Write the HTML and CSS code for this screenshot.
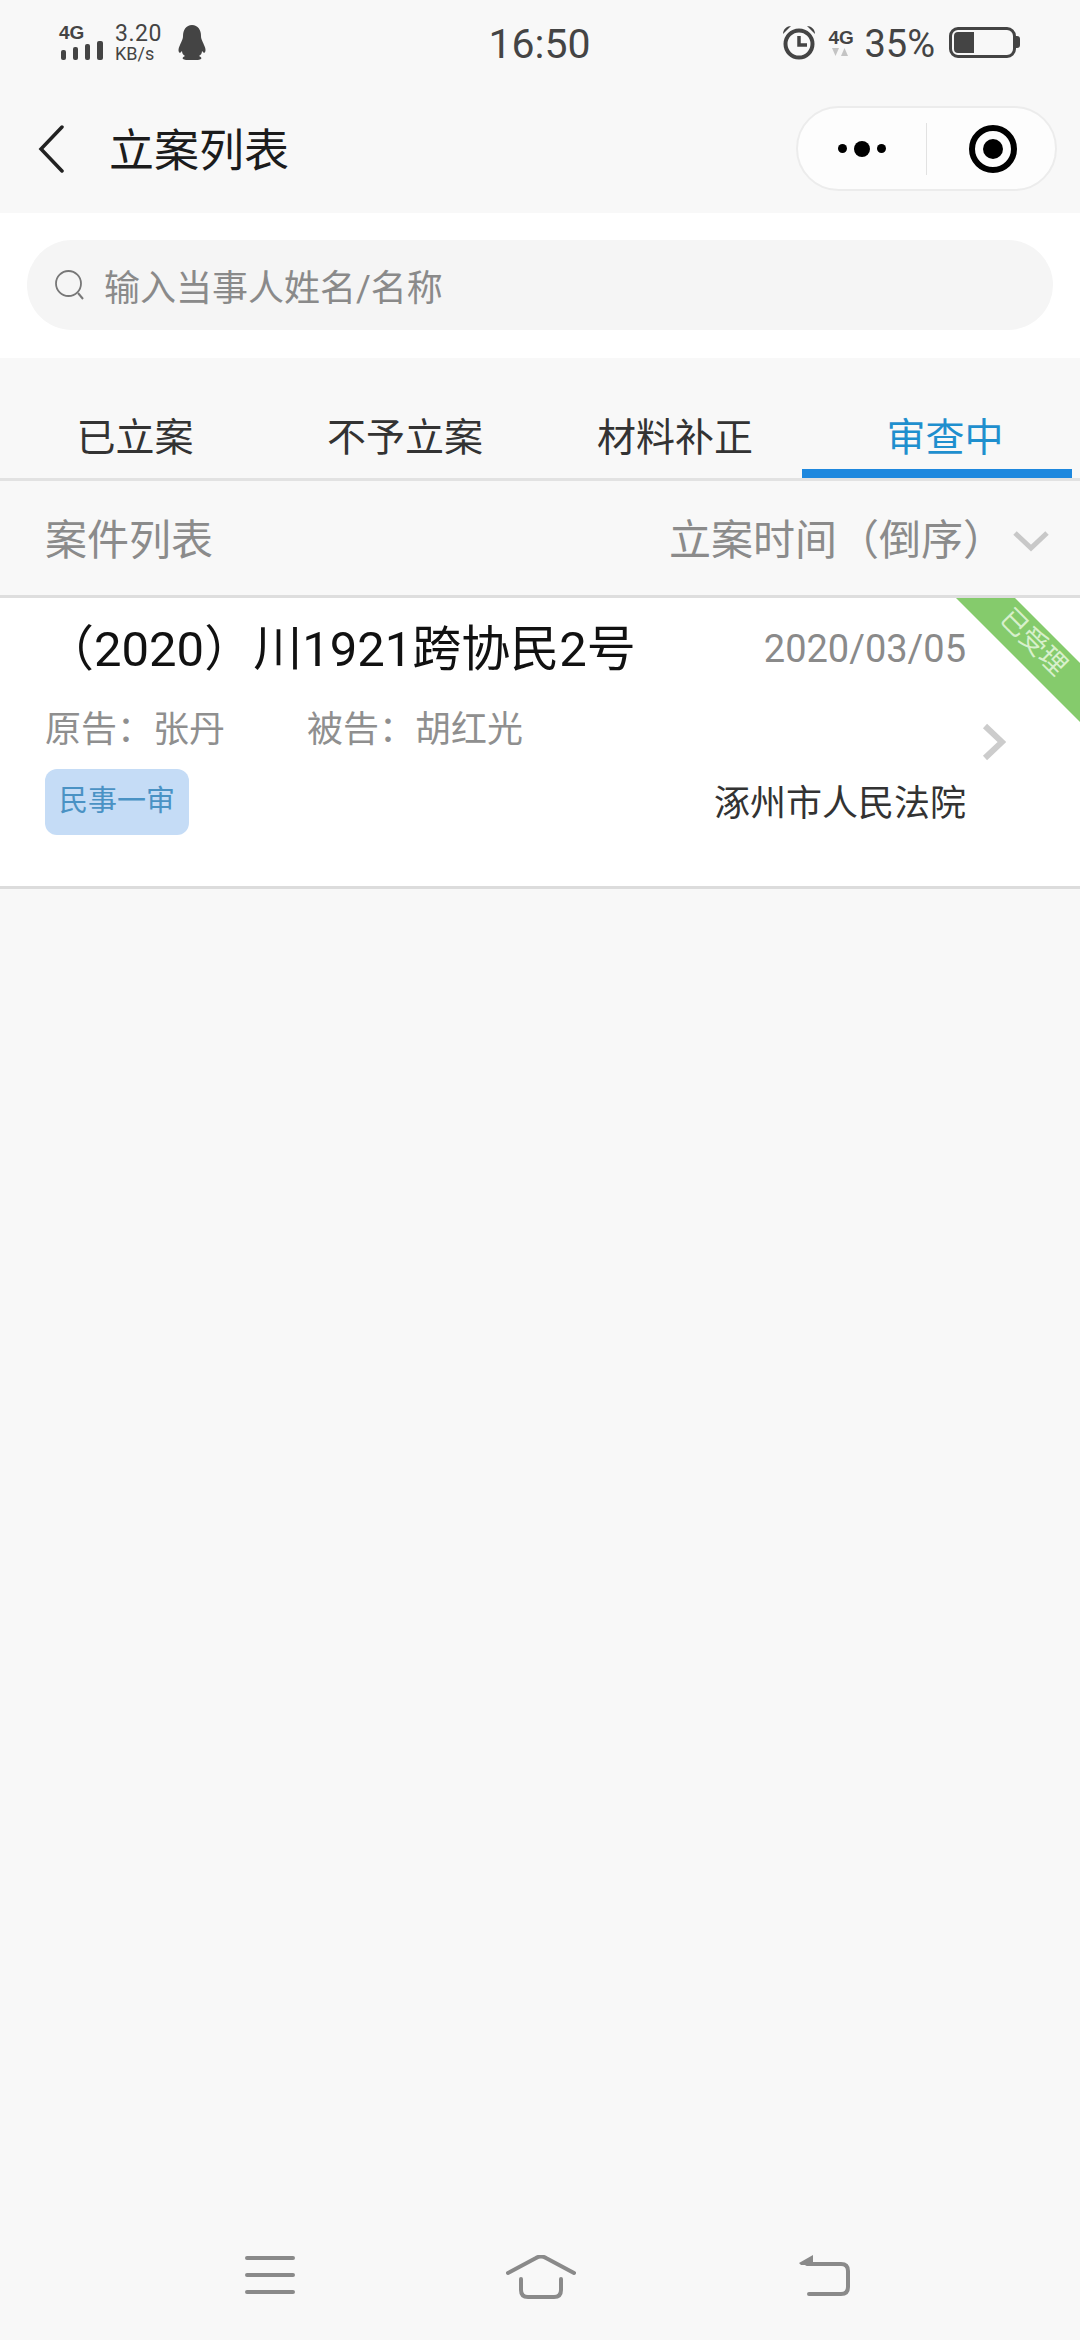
FILE: index.html
```html
<!DOCTYPE html>
<html lang="zh-CN">
<head>
  <meta charset="UTF-8" />
  <meta name="viewport" content="width=device-width, initial-scale=1.0"/>
  <title>立案列表</title>
  <link rel="stylesheet" href="styles.css">
</head>
<body>
  <div class="page">

    <!-- phone status bar -->
    <div class="statusbar">
      <div class="status-left">
        <div class="signal">
          <span class="net-label">4G</span>
          <svg width="44" height="20" viewBox="0 0 44 20">
            <rect x="2" y="9" width="5" height="10" rx="2"/>
            <rect x="14" y="6" width="5" height="13" rx="2"/>
            <rect x="26" y="3" width="5" height="16" rx="2"/>
            <rect x="38" y="0" width="6" height="19" rx="2"/>
          </svg>
        </div>
        <div class="netspeed">
          <span class="speed-num">3.20</span>
          <span class="speed-unit">KB/s</span>
        </div>
        <svg class="ic-qq" width="28" height="35" viewBox="0 0 28 35">
          <path d="M14 0c6 0 9 5 9 11 0 3 1 4 3 9 2 4 2 7 0 8l-2-2c0 2-1 4-3 5 2 1 3 2 2 3-1 1-4 1-9 1s-8 0-9-1c-1-1 0-2 2-3-2-1-3-3-3-5l-2 2c-2-1-2-4 0-8 2-5 3-6 3-9C5 5 8 0 14 0z"/>
        </svg>
      </div>
      <div class="status-time">16:50</div>
      <div class="status-right">
        <svg class="ic-alarm" width="34" height="35" viewBox="0 0 34 35">
          <circle cx="17" cy="19" r="13.500" fill="none" stroke-width="4"/>
          <path d="M17 11v9h8" fill="none" stroke-width="3.500"/>
          <path d="M1 9c0-5 4-8 8-8z"/>
          <path d="M33 9c0-5-4-8-8-8z"/>
        </svg>
        <div class="signal signal-data">
          <span class="net-label">4G</span>
          <svg width="24" height="12" viewBox="0 0 24 12">
            <path d="M4 2h7l-3.500 8zM13 10h7l-3.500-8z" class="arrows"/>
          </svg>
        </div>
        <span class="battery-pct">35%</span>
        <div class="battery">
          <div class="battery-fill"></div>
        </div>
        <div class="battery-nib"></div>
      </div>
    </div>

    <!-- title bar with mini program capsule -->
    <div class="navbar">
      <svg class="nav-back" width="26" height="48" viewBox="0 0 26 48">
        <path d="M24 2 L3 24 L24 46" fill="none" stroke="#222" stroke-width="3.500" stroke-linecap="round"/>
      </svg>
      <div class="nav-title">立案列表</div>
      <div class="capsule">
        <div class="capsule-more">
          <span class="dot"></span>
          <span class="dot dot-big"></span>
          <span class="dot"></span>
        </div>
        <div class="capsule-line"></div>
        <div class="capsule-close">
          <span class="target"></span>
        </div>
      </div>
    </div>

    <div class="search-wrap">
      <div class="search">
        <svg width="30" height="30" viewBox="0 0 30 30">
          <circle cx="13.500" cy="13.500" r="12.500" fill="none" stroke="#777" stroke-width="1.800"/>
          <path d="M23 23l5 6" fill="none" stroke="#777" stroke-width="2"/>
        </svg>
        <span class="search-text">输入当事人姓名/名称</span>
      </div>
    </div>

    <div class="tabs">
      <div class="tab">已立案</div>
      <div class="tab">不予立案</div>
      <div class="tab">材料补正</div>
      <div class="tab active">审查中</div>
    </div>

    <div class="list-head">
      <span class="list-title">案件列表</span>
      <div class="sort">
        <span>立案时间（倒序）</span>
        <svg width="36" height="22" viewBox="0 0 36 22">
          <path d="M2 3 L18 18 L34 3" fill="none" stroke="#c8c8c8" stroke-width="5"/>
        </svg>
      </div>
    </div>

    <div class="card">
      <div class="card-body">
        <div class="card-row row-title">
          <span class="case-no">（2020）川1921跨协民2号</span>
          <span class="case-date">2020/03/05</span>
        </div>
        <div class="parties">
          <span class="party">原告：张丹</span>
          <span class="party">被告：胡红光</span>
        </div>
        <div class="card-row row-foot">
          <span class="tag">民事一审</span>
          <span class="court">涿州市人民法院</span>
        </div>
      </div>
      <svg class="card-arrow" width="24" height="38" viewBox="0 0 24 38">
        <path d="M3 3 L20 19 L3 35" fill="none" stroke="#cccccc" stroke-width="6"/>
      </svg>
      <div class="ribbon"><span>已受理</span></div>
    </div>

    <div class="spacer"></div>

    <!-- android navigation keys -->
    <div class="keys">
      <svg width="50" height="40" viewBox="0 0 50 40">
        <path d="M2 3h46M2 20h46M2 37h46" fill="none" stroke="#8a8a8a" stroke-width="4" stroke-linecap="round"/>
      </svg>
      <svg class="key-home" width="70" height="44" viewBox="0 0 70 44">
        <path d="M2 18 L30 3 Q35 0 40 3 L68 18" fill="none" stroke="#8a8a8a" stroke-width="4" stroke-linecap="round"/>
        <path d="M15 24v11q0 7 7 7h26q7 0 7-7V24" fill="none" stroke="#8a8a8a" stroke-width="4" stroke-linecap="round"/>
      </svg>
      <svg class="key-back" width="51" height="42" viewBox="0 0 51 42">
        <path d="M0 8 L14 0 V10 H2z" fill="#8a8a8a"/>
        <path d="M8 9H42q7 0 7 7v16q0 7-7 7H10" fill="none" stroke="#8a8a8a" stroke-width="4" stroke-linecap="round"/>
      </svg>
    </div>

  </div>
</body>
</html>
```

FILE: styles.css
```css
* {
  box-sizing: border-box;
}

body {
  margin: 0;
  background-color: #f8f8f8;
  font-family: Roboto, "Noto Sans CJK SC", sans-serif;
  text-spacing-trim: space-all;
}

.page {
  width: 1080px;
  height: 2340px;
  display: flex;
  flex-direction: column;
  overflow: hidden;
}

/* status bar */
.statusbar {
  height: 90px;
  padding: 0 60px 0 59px;
  display: flex;
  align-items: center;
  color: #444;
  flex-shrink: 0;
}

.statusbar svg {
  fill: #444;
  stroke: #444;
  stroke-width: 0;
}

.status-left {
  flex: 1;
  display: flex;
  align-items: center;
}

.signal {
  width: 44px;
  margin-top: -6px;
  display: flex;
  flex-direction: column;
}

.net-label {
  font-family: "Liberation Sans", sans-serif;
  font-size: 19px;
  line-height: 17px;
  font-weight: bold;
}

.netspeed {
  margin-left: 12px;
  margin-top: -2px;
  display: flex;
  flex-direction: column;
  width: 63px;
}

.speed-num {
  font-size: 23px;
  line-height: 20px;
  letter-spacing: 0.5px;
}

.speed-unit {
  font-size: 18px;
  line-height: 20px;
}

.ic-qq {
  margin-top: -6px;
}

.status-time {
  font-size: 41px;
  line-height: 48px;
  margin-top: -2px;
}

.status-right {
  flex: 1;
  display: flex;
  align-items: center;
  justify-content: flex-end;
}

.ic-alarm {
  margin-top: -6px;
}

.ic-alarm path:first-of-type {
  stroke-width: 3.500;
}

.signal-data {
  width: 24px;
  margin-left: 12px;
  margin-top: -4px;
}

.arrows {
  fill: #c4c4c4;
}

.battery-pct {
  margin-left: 12px;
  font-size: 38px;
  line-height: 42px;
  margin-top: -3px;
}

.battery {
  margin-left: 14px;
  margin-top: -6px;
  width: 67px;
  height: 31px;
  border: 3px solid #444;
  border-radius: 9px;
  padding: 2px;
}

.battery-fill {
  width: 20px;
  height: 21px;
  border-radius: 4px 0 0 4px;
  background-color: #444;
}

.battery-nib {
  margin-top: -6px;
  width: 4px;
  height: 12px;
  border-radius: 0 3px 3px 0;
  background-color: #444;
}

/* title bar */
.navbar {
  height: 123px;
  padding: 0 23px 6px 38px;
  display: flex;
  align-items: center;
  flex-shrink: 0;
}

.nav-title {
  margin-left: 45px;
  margin-top: -2px;
  font-size: 45px;
  color: #1c1c1c;
}

.capsule {
  margin-left: auto;
  width: 261px;
  height: 85px;
  border: 2px solid #ececec;
  border-radius: 43px;
  background-color: #fdfdfd;
  display: flex;
  align-items: center;
}

.capsule-more {
  width: 128px;
  display: flex;
  align-items: center;
  justify-content: center;
  gap: 7px;
}

.dot {
  width: 9px;
  height: 9px;
  border-radius: 50%;
  background-color: #000;
}

.dot-big {
  width: 16px;
  height: 16px;
}

.capsule-line {
  width: 1px;
  height: 52px;
  background-color: #e2e2e2;
}

.capsule-close {
  flex: 1;
  display: flex;
  justify-content: center;
  padding-left: 4px;
}

.target {
  display: block;
  width: 48px;
  height: 48px;
  border: 6px solid #000;
  border-radius: 50%;
  position: relative;
}

.target::after {
  content: "";
  position: absolute;
  top: 8px;
  left: 8px;
  width: 20px;
  height: 20px;
  border-radius: 50%;
  background-color: #000;
}

/* search */
.search-wrap {
  height: 145px;
  padding: 27px 27px 28px;
  background-color: #fff;
  flex-shrink: 0;
}

.search {
  height: 90px;
  border-radius: 45px;
  background-color: #f5f5f5;
  padding-left: 28px;
  display: flex;
  align-items: center;
}

.search-text {
  margin-left: 19px;
  font-size: 36px;
  color: #8a8a8a;
}

/* tabs */
.tabs {
  height: 123px;
  border-bottom: 3px solid #e2e2e2;
  display: grid;
  grid-template-columns: repeat(4, 1fr);
  align-items: end;
  flex-shrink: 0;
  font-size: 39px;
  color: #333;
}

.tab {
  position: relative;
  height: 66px;
  line-height: 52px;
  text-align: center;
}

.tab.active {
  color: #1f8fce;
}

.tab.active::after {
  content: "";
  position: absolute;
  left: -8px;
  bottom: 0;
  width: 270px;
  height: 9px;
  background-color: #1e88de;
}

/* list head */
.list-head {
  height: 114px;
  padding: 0 31px 2px 45px;
  display: flex;
  align-items: center;
  justify-content: space-between;
  font-size: 42px;
  color: #8b8b8b;
  flex-shrink: 0;
}

.list-title,
.sort span {
  margin-top: -2px;
}

.sort {
  display: flex;
  align-items: center;
  gap: 8px;
}

.sort svg {
  margin-top: 8px;
}

/* case card */
.card {
  position: relative;
  height: 294px;
  padding-left: 45px;
  border-top: 3px solid #dedede;
  border-bottom: 3px solid #dcdcdc;
  background-color: #fff;
  display: flex;
  align-items: flex-start;
  flex-shrink: 0;
}

.card-body {
  width: 921px;
}

.card-row {
  display: flex;
  align-items: center;
  justify-content: space-between;
}

.row-title {
  height: 98px;
}

.case-no {
  margin-top: -5px;
  font-size: 49px;
  color: #111;
}

.case-date {
  margin-top: 4px;
  font-size: 38px;
  color: #8a8a8a;
}

.parties {
  height: 62px;
  padding-bottom: 3px;
  display: flex;
  align-items: center;
  font-size: 36px;
  color: #8f8f8f;
}

.party {
  width: 262px;
}

.row-foot {
  margin-top: 11px;
  height: 66px;
}

.tag {
  width: 144px;
  height: 66px;
  border-radius: 12px;
  background-color: #c5dcf6;
  color: #4a92c4;
  font-size: 29px;
  line-height: 64px;
  text-align: center;
}

.court {
  margin-top: -4px;
  font-size: 36px;
  color: #333;
}

.card-arrow {
  align-self: center;
  margin-left: 16px;
}

.ribbon {
  position: absolute;
  top: 0;
  right: 0;
  width: 124px;
  height: 124px;
  background-color: #85cb6c;
  clip-path: polygon(0 0, 59px 0, 124px 65px, 124px 124px);
}

.ribbon span {
  position: absolute;
  top: 28px;
  left: 37px;
  font-size: 27px;
  line-height: 32px;
  color: #d8f0cc;
  transform: rotate(45deg);
}

.spacer {
  flex: 1;
}

/* bottom keys */
.keys {
  height: 85px;
  padding-left: 245px;
  display: flex;
  align-items: flex-start;
  flex-shrink: 0;
}

.key-home {
  margin-left: 211px;
}

.key-back {
  margin-left: 223px;
}
```
